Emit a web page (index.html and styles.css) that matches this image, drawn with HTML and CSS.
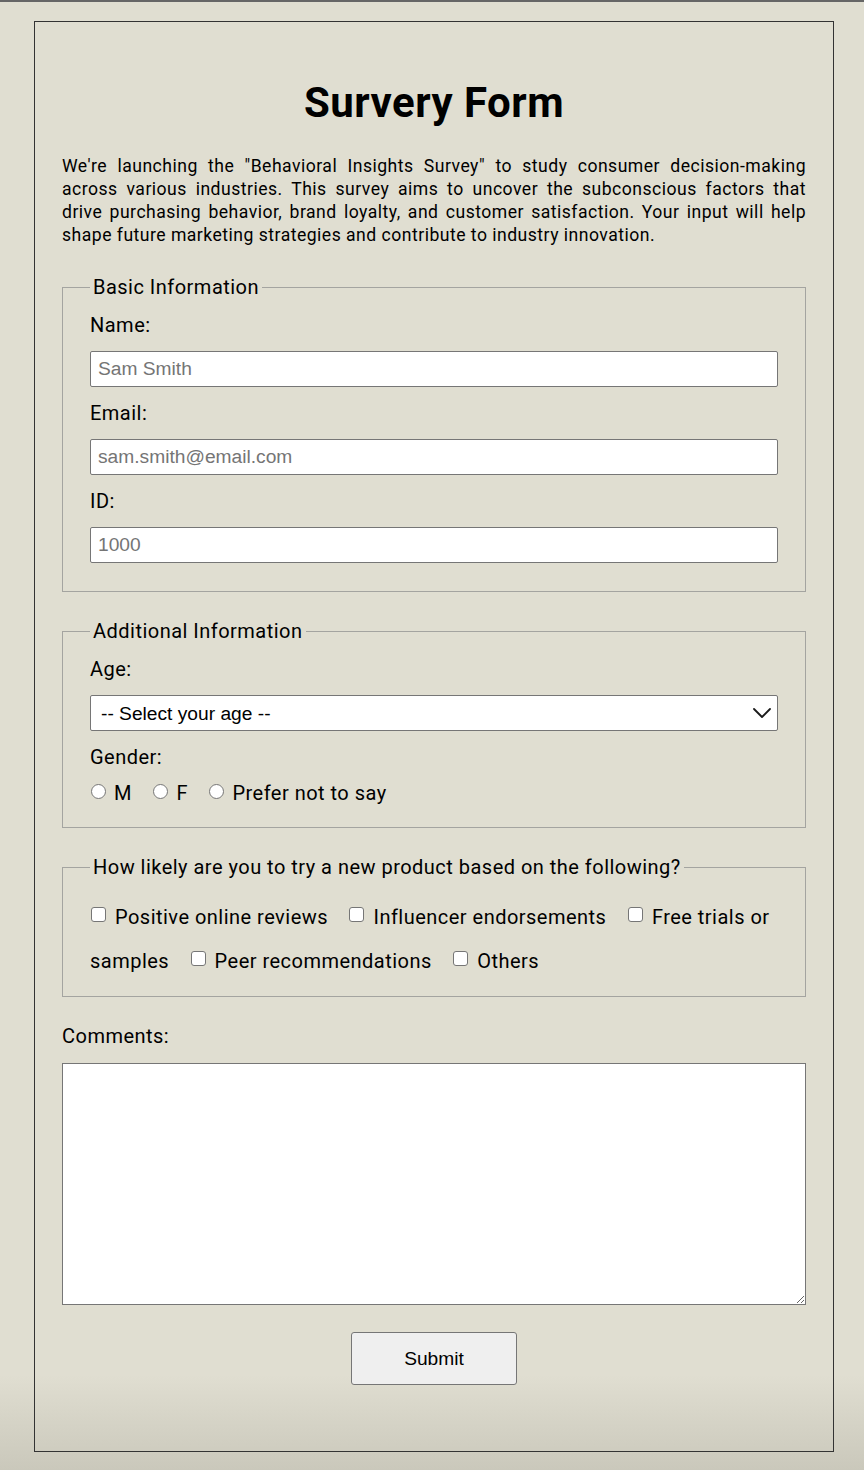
FILE: index.html
```html
<!DOCTYPE html>
<html lang="en">
<head>
<meta charset="utf-8">
<title>Survery Form</title>
<link rel="stylesheet" href="styles.css">
</head>
<body>
<main class="survey">
  <h1 class="title">Survery Form</h1>
  <p class="intro">We're launching the "Behavioral Insights Survey" to study consumer decision-making across various industries. This survey aims to uncover the subconscious factors that drive purchasing behavior, brand loyalty, and customer satisfaction. Your input will help shape future marketing strategies and contribute to industry innovation.</p>
  <form class="form">
    <fieldset class="group">
      <legend class="group-title">Basic Information</legend>
      <label class="field-label" for="name">Name:</label>
      <input class="text-input" id="name" type="text" placeholder="Sam Smith">
      <label class="field-label" for="email">Email:</label>
      <input class="text-input" id="email" type="email" placeholder="sam.smith@email.com">
      <label class="field-label" for="idnum">ID:</label>
      <input class="text-input" id="idnum" type="number" placeholder="1000">
    </fieldset>

    <fieldset class="group group-compact">
      <legend class="group-title">Additional Information</legend>
      <label class="field-label" for="age">Age:</label>
      <div class="select-wrap">
        <select class="select-input" id="age">
          <option>-- Select your age --</option>
        </select>
        <svg class="chevron" width="18" height="10" viewBox="0 0 18 10" aria-hidden="true"><path d="M1 1 L9 9 L17 1" fill="none" stroke="#1a1a1a" stroke-width="1.8" stroke-linecap="round" stroke-linejoin="round"/></svg>
      </div>
      <label class="field-label">Gender:</label>
      <div class="choice-row choice-row-radio">
        <label class="choice"><input class="radio" type="radio" name="gender">M</label>
        <label class="choice"><input class="radio" type="radio" name="gender">F</label>
        <label class="choice"><input class="radio" type="radio" name="gender">Prefer not to say</label>
      </div>
    </fieldset>

    <fieldset class="group group-compact">
      <legend class="group-title">How likely are you to try a new product based on the following?</legend>
      <div class="choice-row choice-row-check">
        <label class="choice"><input class="check" type="checkbox">Positive online reviews</label>
        <label class="choice"><input class="check" type="checkbox">Influencer endorsements</label>
        <label class="choice"><input class="check" type="checkbox">Free trials or samples</label>
        <label class="choice"><input class="check" type="checkbox">Peer recommendations</label>
        <label class="choice"><input class="check" type="checkbox">Others</label>
      </div>
    </fieldset>

    <label class="field-label comments-label" for="comments">Comments:</label>
    <textarea class="comments" id="comments"></textarea>

    <div class="actions">
      <button class="submit" type="submit">Submit</button>
    </div>
  </form>
</main>
</body>
</html>
```

FILE: styles.css
```css
html {
  margin: 0;
  padding: 0;
}

body {
  margin: 0;
  padding: 0 0 0 4px;
  min-height: 100vh;
  box-sizing: border-box;
  border-top: 2px solid #666666;
  background: linear-gradient(to bottom, #e0ded1 0, #e0ded1 calc(100% - 95px), #cac8bb 100%);
  font-family: Roboto, "Liberation Sans", Arial, sans-serif;
  letter-spacing: 0.03em;
  color: #000;
}

.survey {
  box-sizing: border-box;
  width: 800px;
  margin: 19px auto 18px;
  padding: 27px 27px 66px;
  border: 1px solid #333333;
}

.title {
  margin: 30px 0 29px;
  font-size: 42px;
  line-height: 47px;
  font-weight: 700;
  text-align: center;
}

.intro {
  margin: 0 0 29px;
  font-size: 17.6px;
  line-height: 23px;
  text-align: justify;
}

.form {
  margin: 0;
}

.group {
  margin: 0 0 28px;
  padding: 0 27px 28px;
  border: 1px solid #a4a4a0;
  min-inline-size: 0;
}

.group-compact {
  padding-bottom: 12px;
}

.group-title {
  padding: 0 3px;
  font-size: 20px;
  line-height: 23px;
}

.field-label {
  display: block;
  margin-top: 14.5px;
  font-size: 20px;
  line-height: 23px;
}

.comments-label {
  margin-top: 27px;
}

.text-input,
.select-input {
  display: block;
  box-sizing: border-box;
  width: 100%;
  height: 36px;
  margin: 14.5px 0 0;
  border: 1px solid #767676;
  border-radius: 2px;
  background: #fff;
  font-family: "Liberation Sans", Arial, sans-serif;
  font-size: 19.2px;
  letter-spacing: normal;
  color: #000;
  outline: none;
}

.text-input {
  padding: 0 7px;
}

.text-input::placeholder {
  color: #757575;
  opacity: 1;
}

.text-input::-webkit-outer-spin-button,
.text-input::-webkit-inner-spin-button {
  -webkit-appearance: none;
  margin: 0;
}

.select-wrap {
  position: relative;
  margin-top: 14.5px;
}

.select-input {
  margin: 0;
  padding: 0 40px 0 10px;
  appearance: none;
  -webkit-appearance: none;
}

.chevron {
  position: absolute;
  right: 7px;
  top: 13px;
}

.choice-row {
  font-size: 20px;
  line-height: 44px;
}

.choice-row-radio {
  margin-top: 2.5px;
}

.choice-row-check {
  margin-top: 16px;
  margin-bottom: 1px;
}

.choice {
  margin-right: 15px;
}

.radio,
.check {
  appearance: none;
  -webkit-appearance: none;
  display: inline-block;
  box-sizing: border-box;
  width: 15px;
  height: 15px;
  background: #fff;
  border: 1px solid #767676;
  vertical-align: baseline;
}

.radio {
  margin: 0 8px 1px 1px;
  border-radius: 50%;
}

.check {
  margin: 0 9px 2px 1px;
  border-radius: 3px;
}

.comments {
  display: block;
  box-sizing: border-box;
  width: 100%;
  height: 242px;
  margin: 15px 0 0;
  border: 1px solid #767676;
  border-radius: 0;
  background: #fff;
  font-family: "Liberation Sans", Arial, sans-serif;
  font-size: 16px;
  resize: both;
  outline: none;
}

.actions {
  margin-top: 27px;
}

.submit {
  display: block;
  width: 166px;
  height: 53px;
  margin: 0 auto;
  border: 1px solid #767676;
  border-radius: 3px;
  background: #efefef;
  font-family: "Liberation Sans", Arial, sans-serif;
  font-size: 19.2px;
  letter-spacing: normal;
  color: #000;
}
```
